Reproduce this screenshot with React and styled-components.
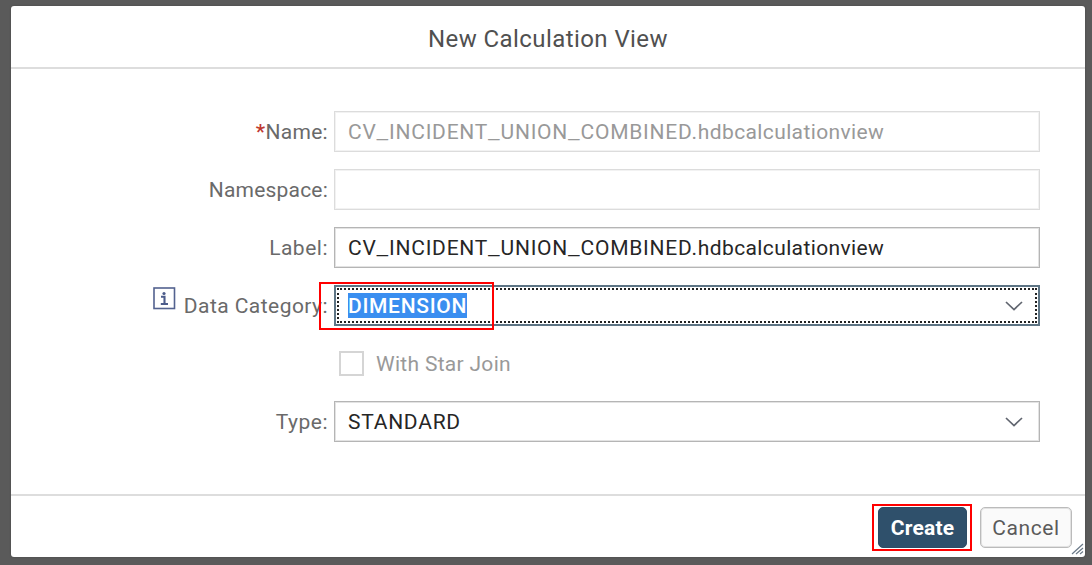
import React from "react";
import styled, { createGlobalStyle } from "styled-components";

const Global = createGlobalStyle`
  * { box-sizing: border-box; }
  body { margin: 0; background: #5a5a5a; overflow: hidden; }
`;

const Backdrop = styled.div`
  height: 565px;
  padding: 6px 7px 8px 11px;
  background: #5a5a5a;
  font-family: Roboto, "Liberation Sans", sans-serif;
  font-size: 21px;
  line-height: 24px;
  color: #6a6a6a;
`;

const Dialog = styled.section`
  position: relative;
  display: flex;
  flex-direction: column;
  height: 551px;
  background: #fff;
  border-radius: 3px;
  box-shadow: 0 0 2px #444;
`;

const Header = styled.header`
  flex: none;
  height: 63px;
  display: flex;
  align-items: center;
  justify-content: center;
  padding-top: 4px;
  border-bottom: 2px solid #ddd;
  color: #505050;
  font-size: 24px;
`;

const Form = styled.div`
  flex: 1;
  display: flex;
  flex-direction: column;
  gap: 17px;
  padding: 42px 45px 0 0;
`;

const Row = styled.div`
  display: flex;
  align-items: center;
  height: 41px;
`;

const LabelCell = styled.div`
  flex: none;
  width: 323px;
  padding-right: 6px;
  display: flex;
  justify-content: flex-end;
  align-items: center;
`;

const Text = styled.span`
  letter-spacing: ${(p) => p.$track || 0}px;
  white-space: nowrap;
`;

const Underscore = styled.span`
  font-size: 27px;
  line-height: 0;
  font-weight: 300;
`;

const Required = styled.span`
  color: #c0392f;
  font-weight: 500;
`;

const Field = styled.div`
  position: relative;
  flex: 1;
  height: 41px;
  display: flex;
  align-items: center;
  justify-content: space-between;
  padding: 0 16px 0 13px;
  border: ${(p) => (p.$disabled ? "1px solid #dcdcdc" : "1px solid #b5b5b5")};
  box-shadow: inset 0 0 0 1px ${(p) => (p.$disabled ? "#f2f2f2" : "#e3e3e3")};
  color: ${(p) => (p.$disabled ? "#999" : "#262626")};
`;

const FocusedField = styled(Field)`
  border: 2px solid #5d7484;
  padding: 0 15px 0 12px;
  box-shadow: none;
  outline: 2px dotted #222;
  outline-offset: -5px;
`;

const Selection = styled.span`
  display: inline-flex;
  align-items: center;
  height: 25px;
  padding: 0;
  background: #3a8ef0;
  color: #fff;
  font-weight: 500;
`;

const InfoIcon = styled.svg`
  margin: -15px 8px 0 0;
`;

const Checkbox = styled.span`
  width: 25px;
  height: 25px;
  margin: 0 12px 0 328px;
  border: 2px solid #d5d5d5;
`;

const CheckLabel = styled.span`
  color: #999;
`;

const Footer = styled.footer`
  flex: none;
  height: 63px;
  display: flex;
  align-items: flex-start;
  justify-content: flex-end;
  gap: 13px;
  padding: 11px 13px 0 0;
  border-top: 2px solid #ddd;
`;

const Button = styled.button`
  height: 41px;
  width: ${(p) => p.$width}px;
  display: flex;
  align-items: center;
  justify-content: center;
  padding: 0;
  border: ${(p) => (p.$primary ? "1px solid #2e4d67" : "1px solid #bbb")};
  box-shadow: ${(p) => (p.$primary ? "none" : "inset 0 0 0 1px #e2e2e2")};
  border-radius: 5px;
  background: ${(p) => (p.$primary ? "#2f506b" : "#fafafa")};
  color: ${(p) => (p.$primary ? "#fff" : "#5a5a5a")};
  font: ${(p) => (p.$primary ? 700 : 400)} 21px/24px Roboto, "Liberation Sans", sans-serif;
`;

const Highlight = styled.div`
  position: absolute;
  left: ${(p) => p.$x}px;
  top: ${(p) => p.$y}px;
  width: ${(p) => p.$w}px;
  height: ${(p) => p.$h}px;
  border: 2px solid #ff0000;
  pointer-events: none;
`;

const Grip = styled.svg`
  position: absolute;
  right: 1px;
  bottom: 2px;
`;

const Chevron = () => (
  <svg width="18" height="10" viewBox="0 0 18 10" fill="none" stroke="#60656f" strokeWidth="1.7">
    <path d="M1 1 L9 8.5 L17 1" />
  </svg>
);

const Info = () => (
  <InfoIcon width="23" height="23" viewBox="0 0 23 23" fill="none">
    <rect x="1" y="1" width="20.5" height="20.5" stroke="#53628f" strokeWidth="1.6" />
    <circle cx="11" cy="6.5" r="1.6" fill="#4c5c8b" />
    <path d="M8 9.8 H11.5 V16.5 M7.8 17 H15" stroke="#4c5c8b" strokeWidth="2.1" />
  </InfoIcon>
);

const FileName = () => (
  <span>
    <Text $track={0.76}>
      CV<Underscore>_</Underscore>INCIDENT<Underscore>_</Underscore>UNION<Underscore>_</Underscore>COMBINED.
    </Text>
    <Text $track={0.38}>hdbcalculationview</Text>
  </span>
);

export default function App() {
  return (
    <Backdrop>
      <Global />
      <Dialog>
        <Header><Text $track={0.42}>New Calculation View</Text></Header>
        <Form>
          <Row>
            <LabelCell><Text $track={0.3}><Required>*</Required>Name:</Text></LabelCell>
            <Field $disabled><FileName /></Field>
          </Row>
          <Row>
            <LabelCell><Text $track={0.2}>Namespace:</Text></LabelCell>
            <Field $disabled />
          </Row>
          <Row>
            <LabelCell><Text $track={0.5}>Label:</Text></LabelCell>
            <Field><FileName /></Field>
          </Row>
          <Row>
            <LabelCell><Info /><Text $track={0.45}>Data Category:</Text></LabelCell>
            <FocusedField>
              <Selection><Text $track={0.7}>DIMENSION</Text></Selection>
              <Chevron />
            </FocusedField>
          </Row>
          <Row>
            <Checkbox />
            <CheckLabel><Text $track={0.3}>With Star Join</Text></CheckLabel>
          </Row>
          <Row>
            <LabelCell><Text $track={0.5}>Type:</Text></LabelCell>
            <Field><Text $track={0.75}>STANDARD</Text><Chevron /></Field>
          </Row>
        </Form>
        <Footer>
          <Button $primary $width={89}><Text $track={0.2}>Create</Text></Button>
          <Button $width={92}><Text $track={0.6}>Cancel</Text></Button>
        </Footer>
        <Highlight $x={308} $y={276} $w={175} $h={48} />
        <Highlight $x={861} $y={498} $w={100} $h={47} />
        <Grip width="13" height="12" viewBox="0 0 13 12" stroke="#6b7a88" strokeWidth="1.2">
          <path d="M1 11 L12 1 M5 11 L12 5 M9 11 L12 8.5" />
        </Grip>
      </Dialog>
    </Backdrop>
  );
}
